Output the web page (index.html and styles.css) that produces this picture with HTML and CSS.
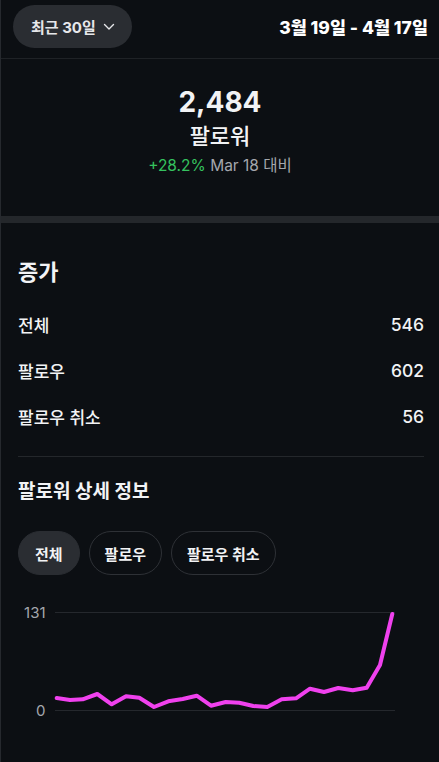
FILE: index.html
```html
<!DOCTYPE html>
<html lang="ko">
  <head>
    <meta charset="UTF-8" />
    <meta name="viewport" content="width=device-width, initial-scale=1" />
    <title>팔로워 인사이트</title>
    <link rel="stylesheet" href="styles.css">
  </head>
  <body>
    <!-- Top bar -->
    <div class="topbar">
      <button class="range-pill">
        최근 30일
        <svg class="chevron" width="12" height="8" viewBox="0 0 12 8">
          <path d="M1.5 1.5 L6 6 L10.5 1.5" fill="none" stroke="#e6e7ea" stroke-width="1.4" stroke-linecap="round" stroke-linejoin="round" />
        </svg>
      </button>
      <div class="date-range">3월 19일 - 4월 17일</div>
    </div>

    <!-- Summary -->
    <div class="summary">
      <div class="total">2,484</div>
      <div class="total-label">팔로워</div>
      <div class="change"><span class="up">+28.2%</span> Mar 18 대비</div>
    </div>

    <div class="band"></div>

    <!-- Growth -->
    <div class="section">
      <h2 class="section-title">증가</h2>
      <div class="row"><span>전체</span><span>546</span></div>
      <div class="row"><span>팔로우</span><span>602</span></div>
      <div class="row"><span>팔로우 취소</span><span>56</span></div>
      <div class="divider"></div>

      <h3 class="sub-title">팔로워 상세 정보</h3>
      <div class="tabs">
        <button class="tab active">전체</button>
        <button class="tab">팔로우</button>
        <button class="tab">팔로우 취소</button>
      </div>
    </div>

    <!-- Chart -->
    <svg class="chart" width="439" height="186" viewBox="0 576 439 186">
      <line x1="55" y1="613.5" x2="395" y2="613.5" stroke="#25282d" stroke-width="1" />
      <line x1="55" y1="711.5" x2="395" y2="711.5" stroke="#25282d" stroke-width="1" />
      <text x="45.5" y="619" text-anchor="end" class="axis">131</text>
      <text x="45.5" y="716.5" text-anchor="end" class="axis">0</text>
      <polyline
        fill="none"
        stroke="#f041ee"
        stroke-width="4"
        stroke-linejoin="round"
        stroke-linecap="round"
        points="56.7,699 70,701 82.7,700.3 97.3,695 111.7,705.3 126,697.3 139.3,698.7 154,708 168.3,702.3 182.7,700 196.7,696.7 211,706.7 225.7,703 239.3,703.7 253.3,707 267.3,708 281.7,700.3 296,699.3 310,689.7 324,693 338.3,689 352.7,691.3 366.7,688.7 380,666 392.3,615"
      />
    </svg>
  </body>
</html>
```

FILE: styles.css
```css
* {
  box-sizing: border-box;
}
html,
body {
  margin: 0;
  padding: 0;
  height: 100%;
  background-color: #0c0f13;
  color: #f2f3f5;
  font-family: Inter, "Noto Sans CJK KR", sans-serif;
  overflow: hidden;
}
body {
  border-left: 1px solid #26292e;
}
button {
  font-family: inherit;
  cursor: pointer;
}

/* Top bar */
.topbar {
  display: flex;
  align-items: center;
  justify-content: space-between;
  padding: 5px 11px 10px 12px;
  border-bottom: 1px solid #1f2226;
}
.range-pill {
  display: flex;
  align-items: center;
  gap: 7px;
  height: 43px;
  padding: 0 17px 0 18px;
  border: none;
  border-radius: 22px;
  background-color: #2a2d32;
  color: #e6e7ea;
  font-size: 15px;
  font-weight: 700;
}
.chevron {
  margin-top: 1px;
}
.date-range {
  font-size: 17.5px;
  font-weight: 800;
  color: #ffffff;
}

/* Summary */
.summary {
  display: flex;
  flex-direction: column;
  align-items: center;
  padding: 26px 0 40px;
}
.total {
  font-size: 28px;
  font-weight: 700;
  line-height: 34px;
}
.total-label {
  margin-top: 3px;
  font-size: 22px;
  font-weight: 500;
  line-height: 28px;
}
.change {
  margin-top: 6px;
  font-size: 15.5px;
  line-height: 20px;
  color: #a4a7ad;
}
.change .up {
  color: #35c25f;
}
.band {
  height: 7px;
  background-color: #24272b;
}

/* Growth section */
.section {
  padding: 0 15px 0 17px;
}
.section-title {
  margin: 35px 0 15px;
  font-size: 22px;
  font-weight: 700;
  line-height: 28px;
}
.row {
  display: flex;
  justify-content: space-between;
  align-items: center;
  height: 46px;
  font-size: 17px;
  font-weight: 500;
}
.row span:last-child {
  font-size: 17.5px;
}
.divider {
  margin-top: 17px;
  height: 1px;
  background-color: #24272b;
}
.sub-title {
  margin: 22px 0 26px;
  font-size: 19px;
  font-weight: 700;
  line-height: 26px;
}
.tabs {
  display: flex;
  gap: 9px;
}
.tab {
  height: 44px;
  padding: 0 15px;
  border: 1px solid #2e3136;
  border-radius: 22px;
  background: transparent;
  color: #f2f3f5;
  font-size: 15px;
  font-weight: 700;
}
.tab.active {
  padding: 0 16px;
  background-color: #2a2d32;
  border-color: #2a2d32;
}

/* Chart */
.chart {
  display: block;
  margin-left: -1px;
}
.axis {
  fill: #a4a7ad;
  font-family: Inter, sans-serif;
  font-size: 15px;
}
```
